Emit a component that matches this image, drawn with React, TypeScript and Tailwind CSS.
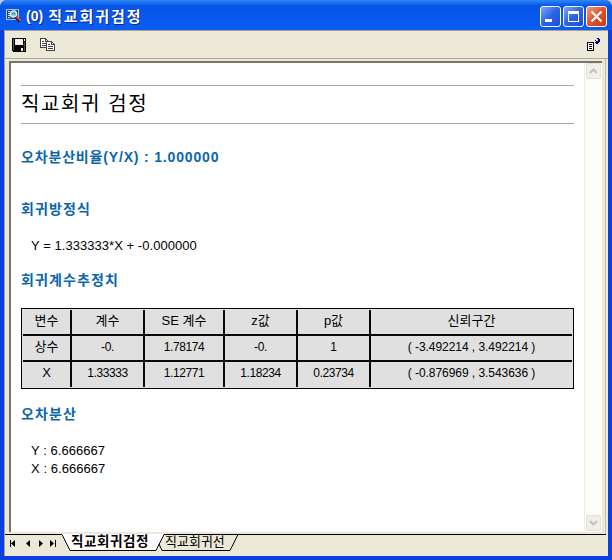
import React from 'react';

const font = "font-['Liberation_Sans','Noto_Sans_CJK_KR',sans-serif]";

function AppIcon() {
  return (
    <svg width="16" height="16" viewBox="0 0 16 16" className="mt-[2px] shrink-0">
      <path d="M0 1h13v11H0z" fill="#a9c7ee" shapeRendering="crispEdges" />
      <path d="M1 2h11v9H1z" fill="#23418c" shapeRendering="crispEdges" />
      <path d="M2 3.500h2M2 5.500h2M2 7.500h2M2 9.500h2" stroke="#d8e8fc" shapeRendering="crispEdges" />
      <circle cx="7.500" cy="6" r="3.200" fill="#7fd4e0" stroke="#e4f4fc" strokeWidth="1.200" />
      <path d="M6 6.500l1.500-2 1.500 2" fill="none" stroke="#2a7090" />
      <path d="M10 8.500l4.500 4" stroke="#e05038" strokeWidth="2.200" />
      <path d="M9 9.500l4.500 4.500" stroke="#301028" strokeWidth="1.600" />
    </svg>
  );
}

function SaveIcon() {
  return (
    <svg width="14" height="14" viewBox="0 0 14 14" shapeRendering="crispEdges">
      <path d="M0 0h14v14H1l-1-1z" fill="#000" />
      <path d="M3 1h8v6H3z" fill="#f4f3ec" />
      <path d="M12 1h1v2h-1z" fill="#f4f3ec" />
      <path d="M9 10h2v3H9z" fill="#f4f3ec" />
      <path d="M1 1h1v11H1zM12 4h1v9h-1z" fill="#55554e" />
    </svg>
  );
}

function CopyIcon() {
  return (
    <svg width="16" height="14" viewBox="0 0 16 14" shapeRendering="crispEdges">
      <path d="M.5 .5h5l3 3v6h-8z" fill="#fff" stroke="#44443e" />
      <path d="M5.500 .5v3h3M2 3.500h2M2 5.500h4M2 7.500h4" fill="none" stroke="#44443e" />
      <path d="M6.500 3.500h5l3 3v6h-8z" fill="#fff" stroke="#44443e" />
      <path d="M11.500 3.500v3h3M8 6.500h2M8 8.500h5M8 10.500h5" fill="none" stroke="#44443e" />
    </svg>
  );
}

function ReportIcon() {
  return (
    <svg width="14" height="14" viewBox="0 0 14 14" shapeRendering="crispEdges">
      <path d="M.5 4.500h6v8h-6z" fill="#fff" stroke="#000" />
      <path d="M2 6.500h3M2 8.500h3M2 10.500h3" stroke="#000" />
      <path d="M10 0h2v1h1v3h-1v1h-1v1H9V5H8V4h1V3H8V2h1v1h2V1h-1z" fill="#00007c" />
    </svg>
  );
}

function CaptionButton({ kind }: { kind: 'min' | 'max' | 'close' }) {
  const close = kind === 'close';
  return (
    <div
      className={`flex h-[21px] w-[21px] items-center justify-center rounded-[3px] border border-white ${
        close
          ? 'bg-linear-to-br from-[#f0987c] via-[#e0502c] to-[#c43c14]'
          : 'bg-linear-to-br from-[#7ea6f8] via-[#2b63e6] to-[#1a4fd6]'
      }`}
    >
      <svg width="19" height="19" viewBox="0 0 19 19" className="shrink-0">
        {kind === 'min' && <path d="M4 12h7v3H4z" fill="#fff" />}
        {kind === 'max' && <path d="M4 4h11v11H4zM5 7v7h9V7z" fill="#fff" fillRule="evenodd" />}
        {close && <path d="M4.500 4.500l10 10M14.500 4.500l-10 10" stroke="#fff" strokeWidth="2.200" />}
      </svg>
    </div>
  );
}

function ScrollButton({ down = false }: { down?: boolean }) {
  return (
    <div className="flex h-[16px] w-[15px] items-center justify-center rounded-[2px] border border-[#e2e1d8] bg-[#f0efe8]">
      <svg width="9" height="6" viewBox="0 0 9 6" className={down ? 'rotate-180' : ''}>
        <path d="M1 5l3.500-3.500L8 5" fill="none" stroke="#c4c3ba" strokeWidth="2" />
      </svg>
    </div>
  );
}

function Heading({ children, className }: { children: React.ReactNode; className: string }) {
  return (
    <h2 className={`flex h-[18px] items-center font-bold whitespace-pre text-[#0a66ad] ${className}`}>
      {children}
    </h2>
  );
}

const rows = [
  ['변수', '계수', 'SE 계수', 'z값', 'p값', '신뢰구간'],
  ['상수', '-0.', '1.78174', '-0.', '1', '( -3.492214 , 3.492214 )'],
  ['X', '1.33333', '1.12771', '1.18234', '0.23734', '( -0.876969 , 3.543636 )'],
];

function cellText(r: number, c: number) {
  if (r === 0) return 'pb-[3px] text-[13px]';
  if (c === 0) return 'pb-[3px] text-[13px]';
  if (c === 5) return 'pb-[3px] text-[12px] tracking-[-0.05px]';
  return 'pb-[3px] text-[12px] tracking-[-0.4px]';
}

function ResultTable() {
  return (
    <div className="mt-[19px] h-[81px] w-[553px] border border-black bg-[#e0e0e0] p-px">
      <div className="grid grid-cols-[47px_71px_78px_71px_71px_201px] grid-rows-[24px_24px_25px] gap-[2px] bg-[#080808]">
        {rows.map((row, r) =>
          row.map((cell, c) => (
            <div
              key={`${r}-${c}`}
              className={`flex items-center justify-center bg-[#e0e0e0] whitespace-pre ${cellText(r, c)}`}
            >
              {cell}
            </div>
          )),
        )}
      </div>
    </div>
  );
}

function TabBar() {
  return (
    <div className="relative h-[22px] w-full">
      <svg width="601" height="22" viewBox="0 0 601 22" className="block">
        <path d="M56 0h103l-8 16H64z" fill="#fff" />
        <path d="M0 .5h57l8 16h86l8-16h442" fill="none" stroke="#000" />
        <path d="M154 10l3 6.500h68l8-16" fill="none" stroke="#000" />
        <path d="M5 6h1v7H5zM10 6v7l-4-3.500zM25 6v7l-4-3.500zM34 6v7l4-3.500zM45 6v7l4-3.500zM50 6h1v7h-1z" fill="#000" />
      </svg>
      <span className="absolute -top-px left-[66px] text-[13.500px] leading-[17px] font-bold tracking-[0.6px] whitespace-nowrap">직교회귀검정</span>
      <span className="absolute -top-px left-[160px] text-[13px] leading-[17px] whitespace-nowrap">직교회귀선</span>
    </div>
  );
}

export default function App() {
  return (
    <div className="bg-[#b9cbe8]">
      <div className={`flex h-[560px] w-[612px] flex-col rounded-t-[7px] bg-[#0a3fe0] text-black ${font}`}>
        <header className="flex h-[30px] shrink-0 items-center rounded-t-[7px] bg-linear-to-b from-[#2f86f6] via-[#0654e6] via-20% to-[#0a5cf4] pr-[5px] pl-[6px]">
          <AppIcon />
          <h1 className="ml-[4px] flex flex-1 items-center gap-[5px] pt-[3px] font-bold whitespace-nowrap text-white [text-shadow:1px_1px_#08298c]">
            <span className="text-[14px]">(0)</span>
            <span className="text-[15px] leading-[20px] tracking-[1.900px]">직교회귀검정</span>
          </h1>
          <div className="flex gap-[2px] pt-[3px]">
            <CaptionButton kind="min" />
            <CaptionButton kind="max" />
            <CaptionButton kind="close" />
          </div>
        </header>
        <main className="mx-[4px] mb-[4px] flex flex-1 flex-col border-t border-l border-[#a5a294] bg-[#ece9d8]">
          <div className="flex h-[28px] items-center justify-between border-b border-[#aca899] pt-px pr-[7px] pl-[7px]">
            <div className="flex items-center gap-[14px]">
              <SaveIcon />
              <CopyIcon />
            </div>
            <ReportIcon />
          </div>
          <div className="mr-[2px] flex h-[475px] border-r border-[#c4c1b2] pt-[2px] pr-[3px] pb-[2px] pl-[4px]">
            <div className="flex flex-1 border-t-2 border-l-2 border-[#77746a] bg-white">
              <article className="w-[573px] pl-[10px]">
                <h1 className="mt-[22px] flex h-[39px] w-[553px] items-center border-y border-[#a9a79c] pb-px text-[20px] tracking-[1.600px] whitespace-nowrap">
                  직교회귀 검정
                </h1>
                <Heading className="mt-[24px] text-[14px] tracking-[0.830px]">오차분산비율(Y/X) : 1.000000</Heading>
                <Heading className="mt-[34px] text-[14px] tracking-[1.100px]">회귀방정식</Heading>
                <p className="mt-[19px] ml-[10px] h-[18px] text-[13px] leading-[18px] tracking-[0.050px] whitespace-nowrap">
                  Y = 1.333333*X + -0.000000
                </p>
                <Heading className="mt-[16px] text-[14px] tracking-[1.100px]">회귀계수추정치</Heading>
                <ResultTable />
                <Heading className="mt-[16px] text-[14px] tracking-[1.100px]">오차분산</Heading>
                <div className="mt-[19px] ml-[10px] text-[13px] leading-[18px] tracking-[0.050px]">
                  <p>Y : 6.666667</p>
                  <p>X : 6.666667</p>
                </div>
              </article>
              <div className="flex flex-1 flex-col items-center justify-between border-l border-[#eeede5] bg-[#fdfdfa] pb-[1px]">
                <ScrollButton />
                <ScrollButton down />
              </div>
            </div>
          </div>
          <TabBar />
        </main>
      </div>
    </div>
  );
}
